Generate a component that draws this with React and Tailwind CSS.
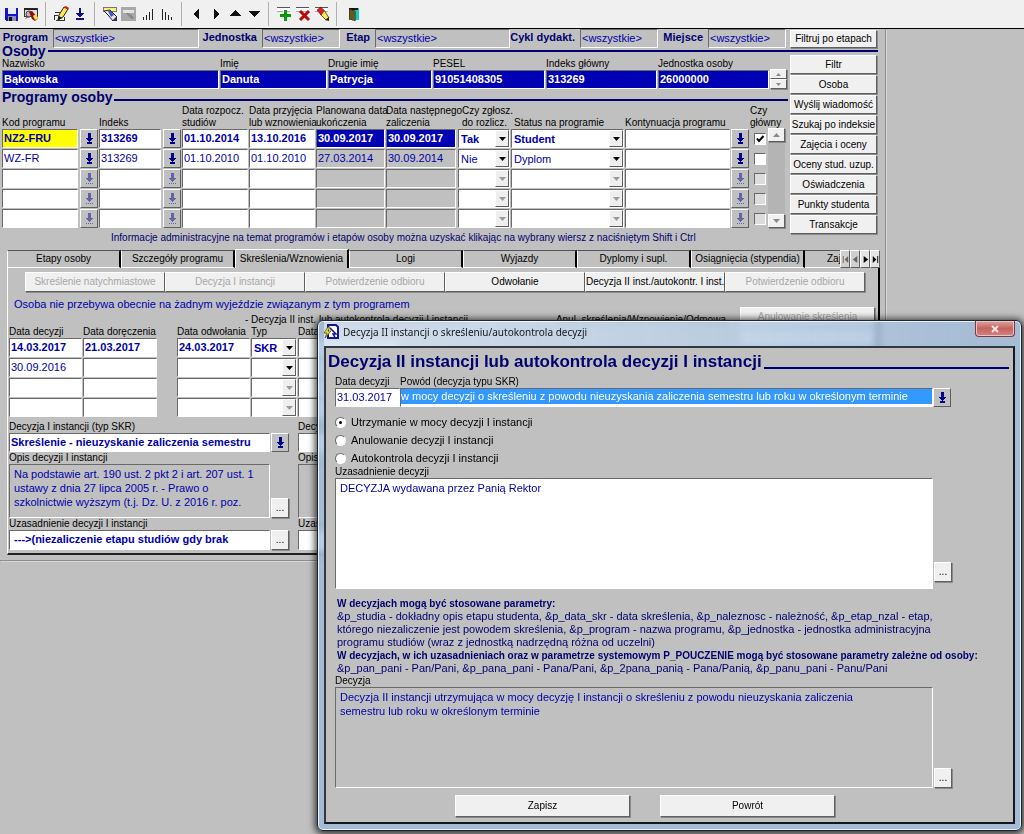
import React from 'react';
import clsx from 'clsx';

const INSET = 'border border-t-[#6a6a6a] border-l-[#6a6a6a] border-b-white border-r-white';
const RAISED = 'border border-t-white border-l-white border-b-[#5f5f5f] border-r-[#5f5f5f]';

const filters = [
  { label: 'Program', labelWidth: 'w-[53px]', width: 'w-[146px]' },
  { label: 'Jednostka', labelWidth: 'w-[63px]', width: 'w-[78px]' },
  { label: 'Etap', labelWidth: 'w-[35px]', width: 'w-[135px]' },
  { label: 'Cykl dydakt.', labelWidth: 'w-[70px]', width: 'w-[78px]' },
  { label: 'Miejsce', labelWidth: 'w-[50px]', width: 'w-[78px]' },
];

const person = [
  { label: 'Nazwisko', value: 'Bąkowska', width: 'w-[217px]' },
  { label: 'Imię', value: 'Danuta', width: 'w-[107px]' },
  { label: 'Drugie imię', value: 'Patrycja', width: 'w-[104px]' },
  { label: 'PESEL', value: '91051408305', width: 'w-[112px]' },
  { label: 'Indeks główny', value: '313269', width: 'w-[111px]' },
  { label: 'Jednostka osoby', value: '26000000', width: 'w-[111px]' },
];

const sideButtons = [
  'Filtr',
  'Osoba',
  'Wyślij wiadomość',
  'Szukaj po indeksie',
  'Zajęcia i oceny',
  'Oceny stud. uzup.',
  'Oświadczenia',
  'Punkty studenta',
  'Transakcje',
];

const programs = [
  { code: 'NZ2-FRU', index: '313269', start: '01.10.2014', admitted: '13.10.2016', planned: '30.09.2017', next: '30.09.2017', report: 'Tak', status: 'Student', main: true, current: true },
  { code: 'WZ-FR', index: '313269', start: '01.10.2010', admitted: '01.10.2010', planned: '27.03.2014', next: '30.09.2014', report: 'Nie', status: 'Dyplom' },
  { empty: true },
  { empty: true },
  { empty: true },
];

const tabs = [
  'Etapy osoby',
  'Szczegóły programu',
  'Skreślenia/Wznowienia',
  'Logi',
  'Wyjazdy',
  'Dyplomy i supl.',
  'Osiągnięcia (stypendia)',
];

const actions = [
  { label: 'Skreślenie natychmiastowe', disabled: true },
  { label: 'Decyzja I instancji', disabled: true },
  { label: 'Potwierdzenie odbioru', disabled: true },
  { label: 'Odwołanie' },
  { label: 'Decyzja II inst./autokontr. I inst.' },
  { label: 'Potwierdzenie odbioru', disabled: true },
];

const decisions = [
  { date: '14.03.2017', delivered: '21.03.2017', appeal: '24.03.2017', type: 'SKR', current: true },
  { date: '30.09.2016', type: '' },
  { empty: true },
  { empty: true },
];

const verdicts = [
  'Utrzymanie w mocy decyzji I instancji',
  'Anulowanie decyzji I instancji',
  'Autokontrola decyzji I instancji',
];

function Field({ className, ...props }) {
  return <input type="text" className={clsx('block min-w-0 px-px pb-[2px] text-[11px] leading-4 outline-none', INSET, className)} {...props} />;
}

function PushButton({ className, children, ...props }) {
  return (
    <button
      type="button"
      className={clsx(
        'whitespace-nowrap bg-[#f0f0f0] text-center text-[10px] leading-3 text-black shadow-[1px_1px_0_#8a8a8a] disabled:text-[#a6a6a6]',
        RAISED,
        className
      )}
      {...props}
    >
      {children}
    </button>
  );
}

function DownArrow({ dim }) {
  return (
    <svg viewBox="0 0 9 12" className="h-3 w-[9px]" fill={dim ? '#6464a4' : '#00008b'} shapeRendering="crispEdges">
      <path d="M3 0h3v5h2v1H7v1H6v1H5v1H4V8H3V7H2V6H1V5h2z" />
      {dim ? <path d="M1 10h1v1H1zM3 10h1v1H3zM5 10h1v1H5zM7 10h1v1H7z" /> : <path d="M2 9h5v2H2z" />}
    </svg>
  );
}

function ListButton({ dim, label = 'Lista wartości' }) {
  return (
    <button
      type="button"
      aria-label={label}
      className={clsx('flex h-[19px] w-[18px] shrink-0 items-center justify-center bg-[#c0c0c0]', RAISED)}
    >
      <DownArrow dim={dim} />
    </button>
  );
}

function Dropdown({ value = '', options = [], dim, bold, label, className }) {
  return (
    <div className={clsx('relative h-[19px] bg-white', INSET, className)}>
      <select
        aria-label={label}
        defaultValue={value}
        disabled={dim}
        className={clsx('block h-full w-full appearance-none bg-transparent pl-[2px] pt-px text-[11px] text-[#0000a8] outline-none', bold && 'font-bold')}
      >
        {[value, ...options].map((o) => (
          <option key={o}>{o}</option>
        ))}
      </select>
      <span className={clsx('pointer-events-none absolute inset-y-0 right-0 flex w-[14px] items-center justify-center bg-[#efefef]', RAISED)}>
        <svg viewBox="0 0 7 4" className="h-1 w-[7px]" fill={dim ? '#9a9a9a' : '#000'}>
          <path d="M0 0h7L3.500 4z" />
        </svg>
      </span>
    </div>
  );
}

function MoreButton({ className }) {
  return (
    <PushButton aria-label="Edytuj" className={clsx('h-5 w-[18px] shrink-0', className)}>
      ...
    </PushButton>
  );
}

function Icon({ children }) {
  return (
    <button type="button" className="h-4 w-4">
      <svg viewBox="0 0 16 16" className="h-4 w-4" shapeRendering="crispEdges">
        {children}
      </svg>
    </button>
  );
}

function Separator() {
  return <span className="ml-[3px] mr-1 h-6 w-px bg-[#b0b0b0]" />;
}

function RowMark() {
  return (
    <>
      <path d="M1 1h13v4H1z" fill="#fff" />
      <path d="M1 1.500h13" stroke="#555" />
      <path d="M1 5.500h13" stroke="#aaa" />
    </>
  );
}

function Toolbar() {
  return (
    <header className="flex h-[29px] items-center gap-[3px] border-b border-black bg-[#f0f0f0] pl-1">
      <Icon>
        <path d="M1 2h13v13H2l-1-1z" fill="#1414c8" />
        <path d="M4 2h8v6H4z" fill="#e8ecff" />
        <path d="M4 10h8v5H4z" fill="#8890b8" />
        <path d="M5 11h3v4H5z" fill="#111" />
      </Icon>
      <Icon>
        <path d="M1 2h13v8H1z" fill="#ddd" stroke="#333" />
        <path d="M1 3h13" stroke="#222" strokeWidth="2" />
        <g shapeRendering="auto">
          <path d="M2 13l3-5 2 3z" fill="#777" />
          <circle cx="6" cy="8" r="3" fill="#bbb" stroke="#444" />
          <path d="M6 6l3-1 6 7-3 3-3-2z" fill="#8d1010" />
          <path d="M10 10l3-2 2 4-3 2z" fill="#f6e34c" />
        </g>
      </Icon>
      <Separator />
      <Icon>
        <path d="M1 14V9h4M3 14h8v-3M2 6h5" stroke="#333" fill="none" />
        <g shapeRendering="auto">
          <path d="M6 9l5-8 4 2-5 8-5 3z" fill="#ffe94a" stroke="#222" strokeWidth="1" />
          <path d="M11 1l2-1 3 2-1 2z" fill="#d02020" />
          <path d="M5 14l1-4 3 2z" fill="#111" />
        </g>
      </Icon>
      <Icon>
        <path d="M7 2h2v5h3v1h-1v1h-1v1H9v1H7v-1H6V9H5V8H4V7h3z" fill="#10108c" />
        <path d="M4 12h8v2H4z" fill="#10108c" />
      </Icon>
      <Separator />
      <Icon>
        <path d="M1 1h13v4H1z" fill="#fff36b" stroke="#777" />
        <g shapeRendering="auto">
          <path d="M2 5l6-1 7 7-4 4-5-6z" fill="#dfe6f5" stroke="#223" />
          <path d="M6 5l3 0 3 4-3 2z" fill="#3b58c8" />
          <path d="M10 15l5-5v5z" fill="#333" />
        </g>
      </Icon>
      <Icon>
        <path d="M0 1h15v14H0z" fill="#a8a8a8" />
        <path d="M2 4h11v3H2z" fill="#e4e4e4" />
        <path d="M5 7l5 1 3 4-3 1-4-4z" fill="#8b8b8b" />
      </Icon>
      <Icon>
        <path d="M3.500 14v-3M6.500 14V9M9.500 14V6M12.500 14V3" stroke="#222" />
      </Icon>
      <Icon>
        <path d="M3.500 3v11M6.500 6v8M9.500 9v5M12.500 11v3" stroke="#222" />
      </Icon>
      <Separator />
      <Icon>
        <path d="M10 3v10L4 8z" fill="#111" />
      </Icon>
      <Icon>
        <path d="M6 3v10l6-5z" fill="#111" />
      </Icon>
      <Icon>
        <path d="M2 10h12L8 4z" fill="#111" />
      </Icon>
      <Icon>
        <path d="M2 5h12L8 11z" fill="#111" />
      </Icon>
      <Separator />
      <Icon>
        <RowMark />
        <path d="M7 4h4v3h4v4h-4v4H7v-4H4V7h3z" fill="#fff" />
        <path d="M8 4h3v4h4v3h-4v4H8v-4H4V8h4z" fill="#089a08" />
      </Icon>
      <Icon>
        <RowMark />
        <path d="M5 5l9 9M14 5l-9 9" stroke="#b80808" strokeWidth="3" shapeRendering="auto" />
      </Icon>
      <Icon>
        <RowMark />
        <g shapeRendering="auto">
          <path d="M6 5l4-1 5 8-3 2-5-5z" fill="#ffe94a" stroke="#333" strokeWidth=".8" />
          <path d="M3 4l4-3 3 4-3 4z" fill="#e02020" stroke="#600" strokeWidth=".6" />
          <path d="M11 14l4-3v4z" fill="#222" />
        </g>
      </Icon>
      <Separator />
      <Icon>
        <path d="M5 2h10v12H5z" fill="#16c8c8" />
        <path d="M5 2h9v2H5z" fill="#111" />
        <path d="M5 3l6 2v10l-6-2z" fill="#6b5a16" stroke="#222" strokeWidth=".5" />
      </Icon>
    </header>
  );
}

function FilterBar() {
  return (
    <div className="flex h-[19px] items-start">
      {filters.map((f) => (
        <label key={f.label} className="flex items-start">
          <span className={clsx('pr-[5px] text-right text-[11px] font-bold leading-4 text-[#00006e]', f.labelWidth)}>{f.label}</span>
          <Field readOnly value="<wszystkie>" className={clsx('h-[19px] bg-[#c0c0c0] text-[#0000a8]', f.width)} />
        </label>
      ))}
      <PushButton className="ml-1 mt-px h-[18px] w-[87px]">Filtruj po etapach</PushButton>
    </div>
  );
}

function SectionTitle({ children, className, lineClass }) {
  return (
    <h2 className={clsx('flex items-center pl-[2px] font-bold text-[#00006e]', className)}>
      <span className="whitespace-nowrap">{children}</span>
      <span className={clsx('ml-[2px] h-[2px] flex-1 bg-[#00006e]', lineClass)} />
    </h2>
  );
}

function PersonFields() {
  return (
    <div className="flex items-end gap-px pl-[2px] pt-1">
      {person.map((p) => (
        <label key={p.label} className={p.width}>
          <span className="block text-[10px] leading-3">{p.label}</span>
          <Field defaultValue={p.value} className="h-[19px] w-full bg-[#0000b4] font-bold text-white" />
        </label>
      ))}
      <div className="flex w-[17px] flex-col">
        <PushButton aria-label="Poprzednia osoba" className="flex h-[10px] items-center justify-center">
          <svg viewBox="0 0 5 3" className="h-[3px] w-[5px]" fill="#888"><path d="M0 3h5L2.500 0z" /></svg>
        </PushButton>
        <PushButton aria-label="Następna osoba" className="flex h-[10px] items-center justify-center">
          <svg viewBox="0 0 5 3" className="h-[3px] w-[5px]" fill="#888"><path d="M0 0h5L2.500 3z" /></svg>
        </PushButton>
      </div>
    </div>
  );
}

function ProgramsTable() {
  return (
    <div className="flex items-end pl-[2px]">
      <table className="w-[766px] table-fixed border-collapse">
        <colgroup>
          <col className="w-[78px]" />
          <col className="w-[19px]" />
          <col className="w-[63px]" />
          <col className="w-[20px]" />
          <col className="w-[67px]" />
          <col className="w-[67px]" />
          <col className="w-[70px]" />
          <col className="w-[71px]" />
          <col className="w-[54px]" />
          <col className="w-[114px]" />
          <col className="w-[106px]" />
          <col className="w-[19px]" />
          <col className="w-[18px]" />
        </colgroup>
        <thead>
          <tr className="h-6 text-left align-bottom text-[10px] leading-3 [&>th]:whitespace-nowrap [&>th]:font-normal">
            <th>Kod programu</th>
            <th />
            <th>Indeks</th>
            <th />
            <th>Data rozpocz.<br />studiów</th>
            <th>Data przyjęcia<br />lub wznowienia</th>
            <th>Planowana data<br />ukończenia</th>
            <th>Data następnego<br />zaliczenia</th>
            <th className="pl-[5px]">Czy zgłosz.<br />do rozlicz.</th>
            <th className="pl-[3px]">Status na programie</th>
            <th>Kontynuacja programu</th>
            <th />
            <th>Czy<br />główny</th>
          </tr>
        </thead>
        <tbody>
          {programs.map((p, i) => {
            const text = p.current ? 'font-bold text-[#0000a8]' : 'text-[#0000a8]';
            const locked = p.current ? 'bg-[#0000b4] font-bold text-white' : 'bg-[#c0c0c0] text-[#0000a8]';
            return (
              <tr key={i} className="h-5 align-top">
                <td className="pr-[2px]"><Field aria-label="Kod programu" defaultValue={p.code} className={clsx('h-[19px] w-full', text, p.current ? 'bg-[#ffff00]' : 'bg-white')} /></td>
                <td><ListButton dim={p.empty} /></td>
                <td className="pr-px"><Field aria-label="Indeks" defaultValue={p.index} className={clsx('h-[19px] w-full bg-white', text)} /></td>
                <td className="pl-px"><ListButton dim={p.empty} /></td>
                <td className="pr-px"><Field aria-label="Data rozpoczęcia studiów" defaultValue={p.start} className={clsx('h-[19px] w-full bg-white', text)} /></td>
                <td className="pr-px"><Field aria-label="Data przyjęcia" defaultValue={p.admitted} className={clsx('h-[19px] w-full bg-white', text)} /></td>
                <td className="pr-px"><Field aria-label="Planowana data ukończenia" readOnly value={p.planned ?? ''} className={clsx('h-[19px] w-full', locked)} /></td>
                <td className="pr-px"><Field aria-label="Data następnego zaliczenia" readOnly value={p.next ?? ''} className={clsx('h-[19px] w-full', locked)} /></td>
                <td className="pl-px pr-px"><Dropdown label="Czy zgłoszony" value={p.report} dim={p.empty} bold={p.current} /></td>
                <td className="pr-px"><Dropdown label="Status" value={p.status} dim={p.empty} bold={p.current} /></td>
                <td className="pr-px"><Field aria-label="Kontynuacja programu" className="h-[19px] w-full bg-white" /></td>
                <td><ListButton dim={p.empty} /></td>
                <td>
                  <span className="relative ml-1 mt-1 block h-3 w-3">
                    <input type="checkbox" aria-label="Czy główny" defaultChecked={p.main} className={clsx('peer block h-3 w-3 appearance-none', INSET, p.empty ? 'bg-[#dcdcdc]' : 'bg-white')} />
                    <svg viewBox="0 0 12 12" className="pointer-events-none absolute inset-0 hidden h-3 w-3 peer-checked:block" fill="none" stroke="#000" strokeWidth="2">
                      <path d="M3 5.500l2 2.500 4.500-5" />
                    </svg>
                  </span>
                </td>
              </tr>
            );
          })}
        </tbody>
      </table>
      <div className="mb-px flex h-[100px] w-[17px] flex-col justify-between bg-[#b4b4b4]">
        <PushButton aria-label="W górę" className="flex h-[14px] items-center justify-center">
          <svg viewBox="0 0 7 4" className="h-1 w-[7px]" fill="#888"><path d="M0 4h7L3.500 0z" /></svg>
        </PushButton>
        <PushButton aria-label="W dół" className="flex h-[14px] items-center justify-center">
          <svg viewBox="0 0 7 4" className="h-1 w-[7px]" fill="#888"><path d="M0 0h7L3.500 4z" /></svg>
        </PushButton>
      </div>
    </div>
  );
}

function TabBar() {
  return (
    <div className="flex h-[19px] items-end overflow-hidden" role="tablist">
      {tabs.map((t, i) => (
        <button
          key={t}
          type="button"
          role="tab"
          aria-selected={i === 2}
          className={clsx(
            'w-[114px] shrink-0 whitespace-nowrap border-l border-r-2 border-t border-l-white border-r-black text-[10px] leading-3',
            i === 2 ? 'h-[19px] border-t-white' : 'h-[18px] border-b border-b-white border-t-[#555]'
          )}
        >
          {t}
        </button>
      ))}
      <button type="button" role="tab" aria-selected="false" className="h-[18px] min-w-0 flex-1 overflow-hidden border-b border-t border-b-white border-t-[#555] pl-[22px] text-left text-[10px] leading-3">
        Zaj
      </button>
      {['M2 1h1v8H2zM8 1v8L4 5z', 'M7 1v8L2 5z', 'M3 1v8l5-4z', 'M2 1v8l4-4zM7 1h1v8H7z'].map((d, i) => (
        <button key={d} type="button" aria-label="Przewiń zakładki" className={clsx('flex h-[18px] w-[10px] shrink-0 items-center justify-center', i < 2 ? 'bg-[#d0d0d0]' : 'bg-[#e4e4e4]', RAISED)}>
          <svg viewBox="0 0 10 10" className="h-[9px] w-[9px] shrink-0" fill={i < 2 ? '#666' : '#000'}><path d={d} /></svg>
        </button>
      ))}
    </div>
  );
}

function DecisionsTable() {
  return (
    <table className="w-[390px] table-fixed border-collapse">
      <colgroup>
        <col className="w-[74px]" />
        <col className="w-[94px]" />
        <col className="w-[74px]" />
        <col className="w-[47px]" />
        <col />
      </colgroup>
      <thead>
        <tr className="h-3 text-left text-[10px] leading-3 [&>th]:whitespace-nowrap [&>th]:font-normal">
          <th>Data decyzji</th>
          <th>Data doręczenia</th>
          <th>Data odwołania</th>
          <th>Typ</th>
          <th>Data</th>
        </tr>
      </thead>
      <tbody>
        {decisions.map((d, i) => {
          const text = clsx('h-[19px] w-full bg-white text-[#0000a8]', d.current && 'font-bold');
          return (
            <tr key={i} className="h-5 align-top">
              <td className="pr-px"><Field aria-label="Data decyzji" defaultValue={d.date} className={text} /></td>
              <td className="pr-5"><Field aria-label="Data doręczenia" defaultValue={d.delivered} className={text} /></td>
              <td className="pr-px"><Field aria-label="Data odwołania" defaultValue={d.appeal} className={text} /></td>
              <td className="pr-px"><Dropdown label="Typ" value={d.type} dim={d.empty} bold={d.current} /></td>
              <td><Field aria-label="Data decyzji II instancji" className={text} /></td>
            </tr>
          );
        })}
      </tbody>
    </table>
  );
}

function FirstInstance() {
  return (
    <div className="w-[289px] text-[10px] leading-3">
      <label htmlFor="first-reason" className="block">Decyzja I instancji (typ SKR)</label>
      <div className="flex gap-px">
        <Field id="first-reason" defaultValue="Skreślenie - nieuzyskanie zaliczenia semestru" className="h-[19px] w-[261px] bg-white font-bold text-[#0000a8]" />
        <ListButton />
      </div>
      <label htmlFor="first-desc" className="block">Opis decyzji I instancji</label>
      <div className="flex items-end gap-px">
        <textarea
          id="first-desc"
          readOnly
          value="Na podstawie art. 190 ust. 2 pkt 2 i art. 207 ust. 1 ustawy z dnia 27 lipca 2005 r. - Prawo o szkolnictwie wyższym (t.j. Dz. U. z 2016 r. poz."
          className={clsx('block h-[54px] w-[261px] resize-none overflow-hidden bg-[#c0c0c0] pl-1 pt-[2px] text-[11px] leading-[14px] text-[#0000a8] outline-none', INSET)}
        />
        <MoreButton />
      </div>
      <label htmlFor="first-ground" className="block">Uzasadnienie decyzji I instancji</label>
      <div className="flex gap-px">
        <Field id="first-ground" defaultValue=" --->(niezaliczenie etapu studiów gdy brak" className="h-5 w-[261px] bg-white font-bold text-[#0000a8]" />
        <MoreButton />
      </div>
    </div>
  );
}

function SecondInstance() {
  return (
    <div className="w-[289px] text-[10px] leading-3">
      <label htmlFor="second-reason" className="block">Decy</label>
      <Field id="second-reason" className="h-[19px] w-full bg-white" />
      <label htmlFor="second-desc" className="block">Opis</label>
      <textarea id="second-desc" readOnly className={clsx('block h-[54px] w-full resize-none bg-[#c0c0c0]', INSET)} />
      <label htmlFor="second-ground" className="block">Uzas</label>
      <Field id="second-ground" className="h-5 w-full bg-white" />
    </div>
  );
}

function RemovalPanel() {
  return (
    <section className="border-b-2 border-l border-r-2 border-b-[#222] border-l-white border-r-black pb-[3px] pl-px pt-1">
      <div className="flex pl-4">
        {actions.map((a, i) => (
          <PushButton key={i} disabled={a.disabled} className="h-5 w-[140px]">
            {a.label}
          </PushButton>
        ))}
      </div>
      <p className="mt-1 pl-[5px] text-[11px] leading-4 text-[#0000a8]">
        Osoba nie przebywa obecnie na żadnym wyjeździe związanym z tym programem
      </p>
      <div className="flex justify-between">
        <div className="flex flex-col">
          <div className="flex gap-[88px] whitespace-nowrap pl-[236px] pt-[2px] text-[10px] leading-3">
            <span>- Decyzja II inst. lub autokontrola decyzji I instancji</span>
            <span>Anul. skreślenia/Wznowienie/Odmowa</span>
          </div>
          <DecisionsTable />
        </div>
        <div className="flex flex-col gap-px pr-[3px]">
          <PushButton disabled className="-mt-[5px] h-5 w-[135px]">Anulowanie skreślenia</PushButton>
          <PushButton disabled aria-label="Wznowienie na studia" className="h-5 w-[135px]" />
        </div>
      </div>
      <div className="mt-[3px] flex">
        <FirstInstance />
        <SecondInstance />
      </div>
    </section>
  );
}

function DecisionDialog() {
  return (
    <div
      role="dialog"
      aria-labelledby="dialog-title"
      className="absolute left-[317px] right-[2px] top-[320px] rounded-md border border-[#20262e] bg-[#9dbbdc]/75 px-[6px] pb-[6px] shadow-[0_1px_7px_2px_rgba(0,0,0,0.75),inset_0_0_0_1px_#e4f0fb] backdrop-blur-[3px]"
    >
      <div className="flex h-[25px] items-start">
        <div className="flex h-full flex-1 items-center gap-1 bg-linear-to-r from-white/50 via-white/30 to-transparent pb-1">
          <svg viewBox="0 0 15 15" className="h-[15px] w-[15px]">
            <path d="M4 1h8l2 2v11H4z" fill="#fff" stroke="#1414a0" strokeWidth="2" />
            <path d="M6 4l6 6H9l2 3" fill="none" stroke="#1414a0" strokeWidth="1.500" />
            <path d="M4 3L0 9h3l-2 5 6-7H4l2-4z" fill="#f5e000" stroke="#222" strokeWidth=".6" />
          </svg>
          <h1 id="dialog-title" className="font-['Noto_Sans',sans-serif] text-[10px] leading-4 text-[#101820]">
            Decyzja II instancji o skreśleniu/autokontrola decyzji
          </h1>
        </div>
        <button
          type="button"
          aria-label="Zamknij"
          className="flex h-[16px] w-10 items-center justify-center rounded-b border border-t-0 border-[#7c3a40] bg-linear-to-b from-[#dba3a0] via-[#c8625f] to-[#cf8580] shadow-[inset_0_0_0_1px_#eac4c4]"
        >
          <svg viewBox="0 0 8 8" className="h-[8px] w-2" stroke="#f4e4e4" strokeWidth="2"><path d="M1 1l6 6M7 1L1 7" /></svg>
        </button>
      </div>

      <div className="border-2 border-b-[#15181c] border-l-[#303840] border-r-[#15181c] border-t-[#303840] bg-[#c0c0c0] pb-[5px] pl-[9px] pr-1">
        <SectionTitle className="-ml-[9px] h-7 text-[17px]" lineClass="mt-3">Decyzja II instancji lub autokontrola decyzji I instancji</SectionTitle>

        <div className="flex items-end">
          <label className="w-[65px] text-[10px] leading-3">
            <span className="block whitespace-nowrap">Data decyzji</span>
            <Field defaultValue="31.03.2017" className="h-[19px] w-full bg-white text-[#0000a8]" />
          </label>
          <label className="w-[533px] text-[10px] leading-3">
            Powód (decyzja typu SKR)
            <span className={clsx('block h-[19px] bg-white', INSET)}>
              <input
                type="text"
                defaultValue="w mocy decyzji o skreśleniu z powodu nieuzyskania zaliczenia semestru lub roku w określonym terminie"
                className="block h-[15px] w-full bg-[#3399ff] text-[11px] leading-[15px] text-white outline-none"
              />
            </span>
          </label>
          <ListButton />
        </div>

        <fieldset className="flex flex-col gap-[2px] pt-[7px]">
          {verdicts.map((v, i) => (
            <label key={v} className="flex h-4 items-center gap-[5px] text-[11px] leading-4">
              <span className="relative block h-[11px] w-[11px]">
                <input
                  type="radio"
                  name="verdict"
                  defaultChecked={i === 0}
                  className={clsx('peer block h-[11px] w-[11px] appearance-none rounded-full bg-white', INSET)}
                />
                <span className="pointer-events-none absolute left-1 top-1 hidden h-[3px] w-[3px] rounded-full bg-black peer-checked:block" />
              </span>
              {v}
            </label>
          ))}
        </fieldset>

        <label htmlFor="ground" className="block text-[10px] leading-3">Uzasadnienie decyzji</label>
        <div className="flex items-end gap-px">
          <textarea
            id="ground"
            defaultValue="DECYZJA wydawana przez Panią Rektor"
            className={clsx('block h-[111px] w-[598px] resize-none bg-white pl-1 pt-[2px] text-[11px] leading-[14px] text-[#0000a8] outline-none', INSET)}
          />
          <MoreButton className="mb-[7px]" />
        </div>

        <div className="whitespace-nowrap pl-[2px] pt-2 text-[11px] leading-[13px] text-[#00006e]">
          <p className="text-[10px] font-bold leading-[13px]">W decyzjach mogą być stosowane parametry:</p>
          <p>
            &amp;p_studia - dokładny opis etapu studenta, &amp;p_data_skr - data skreślenia, &amp;p_naleznosc - należność, &amp;p_etap_nzal - etap,
            <br />
            którego niezaliczenie jest powodem skreślenia, &amp;p_program - nazwa programu, &amp;p_jednostka - jednostka administracyjna
            <br />
            programu studiów (wraz z jednostką nadrzędną różna od uczelni)
          </p>
          <p className="text-[10px] font-bold leading-[13px]">W decyzjach, w ich uzasadnieniach oraz w parametrze systemowym P_POUCZENIE mogą być stosowane parametry zależne od osoby:</p>
          <p>&amp;p_pan_pani - Pan/Pani, &amp;p_pana_pani - Pana/Pani, &amp;p_2pana_panią - Pana/Panią, &amp;p_panu_pani - Panu/Pani</p>
        </div>

        <label htmlFor="decision" className="block text-[10px] leading-3">Decyzja</label>
        <div className="flex items-end gap-px">
          <textarea
            id="decision"
            readOnly
            value={'Decyzja II instancji utrzymująca w mocy decyzję I instancji o skreśleniu z powodu nieuzyskania zaliczenia\nsemestru lub roku w określonym terminie'}
            className={clsx('block h-[101px] w-[598px] resize-none overflow-hidden bg-[#c0c0c0] pl-1 pt-[2px] text-[11px] leading-[14px] text-[#0000a8] outline-none', INSET)}
          />
          <MoreButton />
        </div>

        <div className="flex gap-[30px] pl-[120px] pt-[7px]">
          <PushButton className="h-[22px] w-[175px]">Zapisz</PushButton>
          <PushButton className="h-[22px] w-[175px]">Powrót</PushButton>
        </div>
      </div>
    </div>
  );
}

export default function App() {
  return (
    <div className="relative min-h-screen bg-[#c0c0c0] font-['Liberation_Sans',sans-serif] text-black">
      <Toolbar />
      <main className="w-[886px] border-b border-r border-[#8e8e8e] pb-[5px] shadow-[1px_1px_0_#d8d8d8]">
        <FilterBar />
        <SectionTitle className="mr-[7px] h-[6px] text-[14px]">Osoby</SectionTitle>
        <div className="flex items-start">
          <div className="w-[788px]">
            <PersonFields />
            <SectionTitle className="h-4 text-[14px]" lineClass="mt-[6px]">Programy osoby</SectionTitle>
            <ProgramsTable />
            <p className="pl-[111px] pt-[3px] text-[10px] leading-3 text-[#00006e]">
              Informacje administracyjne na temat programów i etapów osoby można uzyskać klikając na wybrany wiersz z naciśniętym Shift i Ctrl
            </p>
          </div>
          <div className="flex flex-col gap-px pl-[2px] pt-px">
            {sideButtons.map((b) => (
              <PushButton key={b} className="h-[19px] w-[87px]">
                {b}
              </PushButton>
            ))}
          </div>
        </div>
        <div className="ml-[7px] mr-[5px] mt-[5px]">
          <TabBar />
          <RemovalPanel />
        </div>
      </main>
      <DecisionDialog />
    </div>
  );
}
